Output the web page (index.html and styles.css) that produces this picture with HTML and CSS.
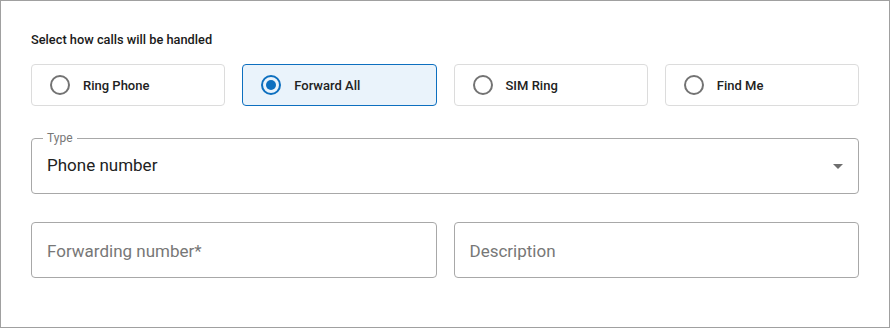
FILE: index.html
```html
<!DOCTYPE html>
<html lang="en">
<head>
    <meta charset="UTF-8">
    <meta name="viewport" content="width=device-width, initial-scale=1.0">
    <title>Call Handling</title>
    <link rel="stylesheet" href="styles.css">
</head>
<body>
    <div class="panel">
        <div class="heading">Select how calls will be handled</div>

        <!-- Handling options -->
        <div class="options">
            <label class="option">
                <span class="radio"></span>
                <span class="option-text">Ring Phone</span>
            </label>
            <label class="option selected">
                <span class="radio"></span>
                <span class="option-text">Forward All</span>
            </label>
            <label class="option">
                <span class="radio"></span>
                <span class="option-text">SIM Ring</span>
            </label>
            <label class="option">
                <span class="radio"></span>
                <span class="option-text">Find Me</span>
            </label>
        </div>

        <!-- Type select -->
        <div class="field select">
            <span class="field-label">Type</span>
            <span class="field-value">Phone number</span>
            <span class="arrow"></span>
        </div>

        <!-- Number fields -->
        <div class="row">
            <div class="field input">
                <span class="placeholder">Forwarding number*</span>
            </div>
            <div class="field input">
                <span class="placeholder">Description</span>
            </div>
        </div>
    </div>
</body>
</html>
```

FILE: styles.css
```css
body {
    margin: 0;
    font-family: Roboto, "Liberation Sans", Arial, sans-serif;
    background: #fff;
}
.panel {
    box-sizing: border-box;
    width: 890px;
    height: 328px;
    border: 1px solid #a0a0a0;
    padding: 31px 30px 0 30px;
}
.heading {
    font-size: 12.8px;
    line-height: 16px;
    font-weight: 500;
    color: #1a1a1a;
}
.options {
    display: grid;
    grid-template-columns: repeat(4, 1fr);
    gap: 17px;
    margin-top: 16px;
}
.option {
    box-sizing: border-box;
    height: 42px;
    display: flex;
    align-items: center;
    padding-left: 18px;
    border: 1px solid #dcdcdc;
    border-radius: 4px;
    cursor: pointer;
}
.radio {
    box-sizing: border-box;
    width: 20px;
    height: 20px;
    border: 2px solid #737373;
    border-radius: 50%;
    display: flex;
    align-items: center;
    justify-content: center;
}
.option-text {
    margin-left: 13px;
    font-size: 13px;
    font-weight: 500;
    color: #222;
}
.option.selected {
    background-color: #eaf3fb;
    border-color: #0d6fbf;
}
.option.selected .radio {
    border-color: #0d6fbf;
}
.option.selected .radio::after {
    content: "";
    width: 10px;
    height: 10px;
    border-radius: 50%;
    background-color: #0d6fbf;
}
.field {
    position: relative;
    box-sizing: border-box;
    height: 56px;
    border: 1px solid #a8a8a8;
    border-radius: 4px;
    padding: 0 15px;
    display: flex;
    align-items: center;
}
.select {
    margin-top: 32px;
    padding-bottom: 3px;
}
.input {
    padding-top: 1px;
}
.field-label {
    position: absolute;
    top: -9px;
    left: 11px;
    padding: 0 4px;
    background: #fff;
    font-size: 12px;
    line-height: 16px;
    color: #777;
}
.field-value {
    font-size: 17px;
    color: #222;
}
.placeholder {
    font-size: 17px;
    color: #777;
}
.arrow {
    margin-left: auto;
    width: 0;
    height: 0;
    margin-top: 3px;
    border-left: 5px solid transparent;
    border-right: 5px solid transparent;
    border-top: 5px solid #6e6e6e;
}
.row {
    display: grid;
    grid-template-columns: 1fr 1fr;
    gap: 17px;
    margin-top: 28px;
}
```
